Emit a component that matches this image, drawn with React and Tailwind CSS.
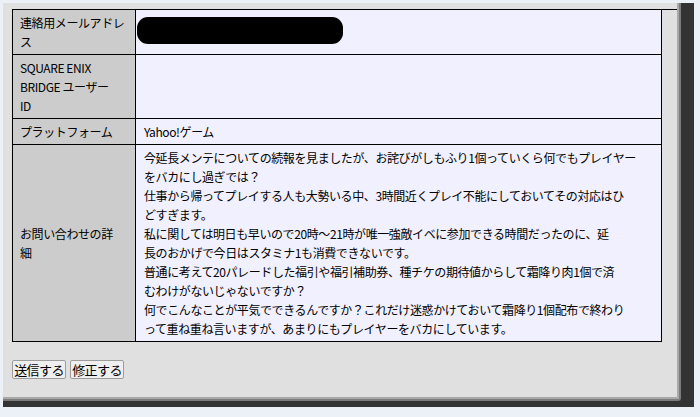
import React from "react";

const font = { fontFamily: '"Noto Sans CJK JP", "Noto Sans", sans-serif' };

function Row({ label, children }) {
  return (
    <>
      <div className="flex items-center bg-[#cccccc] border-r border-b border-black pl-[7px] pr-[4px] py-[3px] leading-[19px] whitespace-nowrap">
        <div>{label}</div>
      </div>
      <div className="bg-[#f0f0ff] border-r border-b border-black pl-[8px] pr-[4px] py-[3px] leading-[19px] whitespace-nowrap">
        {children}
      </div>
    </>
  );
}

const detail = [
  "今延長メンテについての続報を見ましたが、お詫びがしもふり1個っていくら何でもプレイヤー",
  "をバカにし過ぎでは？",
  "仕事から帰ってプレイする人も大勢いる中、3時間近くプレイ不能にしておいてその対応はひ",
  "どすぎます。",
  "私に関しては明日も早いので20時～21時が唯一強敵イベに参加できる時間だったのに、延",
  "長のおかげで今日はスタミナ1も消費できないです。",
  "普通に考えて20パレードした福引や福引補助券、種チケの期待値からして霜降り肉1個で済",
  "むわけがないじゃないですか？",
  "何でこんなことが平気でできるんですか？これだけ迷惑かけておいて霜降り1個配布で終わり",
  "って重ね重ね言いますが、あまりにもプレイヤーをバカにしています。",
];

export default function App() {
  return (
    <div
      className="w-[700px] h-[417px] bg-[#ecf1f8] pt-[3px] pl-[3px] overflow-hidden text-black"
      style={font}
    >
      <div className="w-[691px] h-[404px] bg-[#333333]">
        <div className="w-[678px] h-[398px] border-r-2 border-b-2 border-[#7c7c7c] rounded-br-[3px]">
          <div className="w-[676px] h-[396px] bg-[#e0e0e0] border-r-2 border-b-2 border-[#a9a9a9] pl-[9px] pt-[6px]">
            <div className="grid grid-cols-[123px_526px] border-l border-t border-black text-[12px] tracking-[-0.4px]">
              <Row label={<>連絡用メールアドレ<br />ス</>}>
                <div className="h-[38px] flex items-start">
                  <div className="ml-[-7px] mt-[4px] w-[206px] h-[27px] bg-black rounded-[11px]" />
                </div>
              </Row>
              <Row label={<>SQUARE ENIX<br />BRIDGE ユーザー<br />ID</>}>
                <div />
              </Row>
              <Row label="プラットフォーム">Yahoo!ゲーム</Row>
              <Row label={<>お問い合わせの詳<br />細</>}>
                {detail.map((l, i) => (
                  <div key={i}>{l}</div>
                ))}
              </Row>
            </div>
            <div className="flex gap-[4px] mt-[18px]">
              <button className="w-[54px] h-[19px] bg-[#efefef] border border-[#9c9c9c] rounded-[2px] text-[13px] leading-[17px] tracking-[-0.6px] flex items-center justify-center">
                送信する
              </button>
              <button className="w-[54px] h-[19px] bg-[#efefef] border border-[#9c9c9c] rounded-[2px] text-[13px] leading-[17px] tracking-[-0.6px] flex items-center justify-center">
                修正する
              </button>
            </div>
          </div>
        </div>
      </div>
    </div>
  );
}
